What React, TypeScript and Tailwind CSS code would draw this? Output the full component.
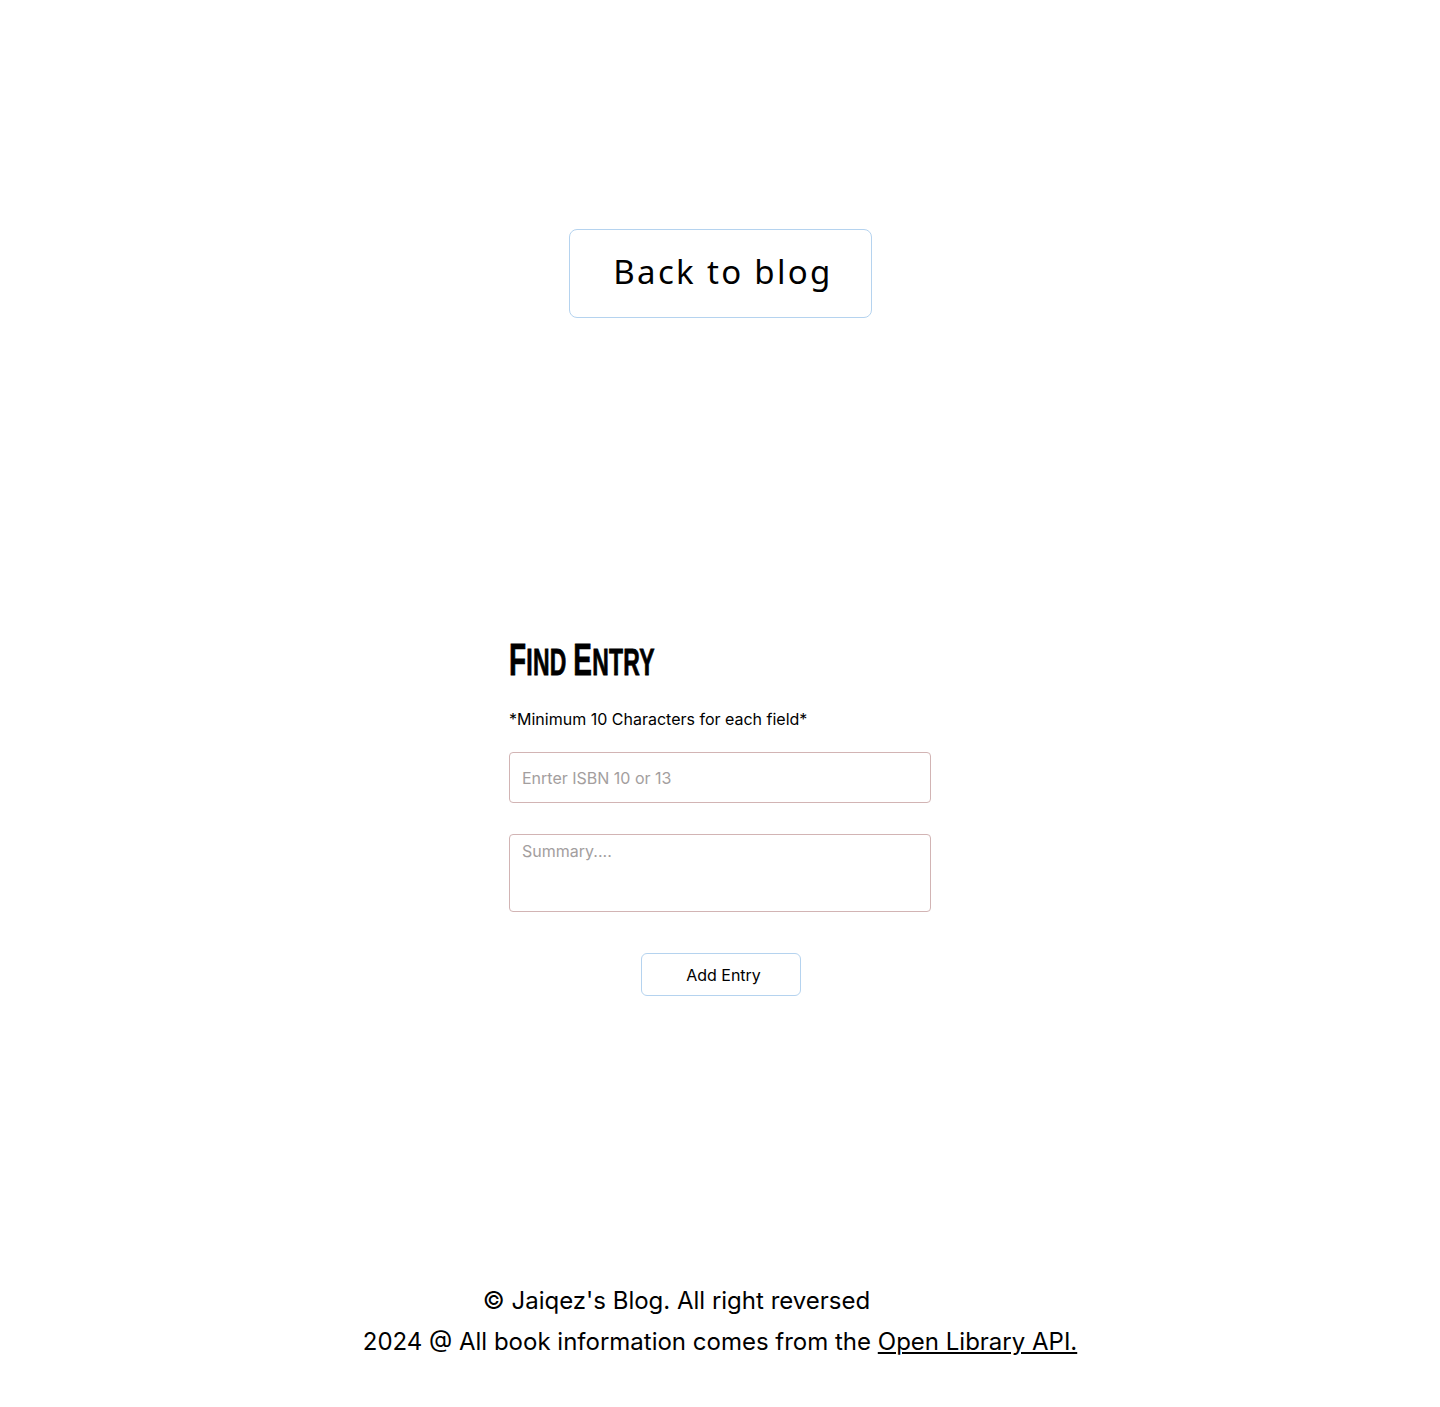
import { useState } from "react";

const App = () => {
  const [isbn, setIsbn] = useState("");
  const [summary, setSummary] = useState("");

  return (
    <div className="min-h-[1407px] bg-white text-black font-['Inter',sans-serif] flex flex-col items-center">
      <div className="pt-[229px]">
        <a
          href="#"
          className="flex h-[89px] w-[303px] items-center justify-center rounded-[8px] border border-[#b5d3ef] pb-[4px] pl-[6px] text-[33px] tracking-[0.07em] font-['Noto_Sans',sans-serif]"
        >
          Back to blog
        </a>
      </div>

      <form className="mt-[319px] flex w-[422px] flex-col" onSubmit={(e) => e.preventDefault()}>
        <h1 className="origin-left scale-x-[0.62] whitespace-nowrap font-['Liberation_Sans',sans-serif] text-[45px] font-bold uppercase leading-[46px] tracking-[0.01em] [-webkit-text-stroke:0.8px_black]">
          <span>F</span>
          <span className="text-[37px]">ind </span>
          <span>E</span>
          <span className="text-[37px]">ntry</span>
        </h1>
        <p className="mt-[23px] text-[16px] leading-[20px]">*Minimum 10 Characters for each field*</p>
        <input
          value={isbn}
          onChange={(e) => setIsbn(e.target.value)}
          placeholder="Enrter ISBN 10 or 13"
          className="mt-[23px] h-[51px] w-full rounded-[4px] border border-[#d2b4b4] px-[12px] text-[16px] outline-none placeholder:text-[#a39e9e]"
        />
        <textarea
          value={summary}
          onChange={(e) => setSummary(e.target.value)}
          placeholder="Summary...."
          className="mt-[31px] h-[78px] w-full resize-none rounded-[4px] border border-[#d2b4b4] px-[12px] py-[4px] text-[16px] outline-none placeholder:text-[#a39e9e]"
        />
        <div className="mt-[41px] flex justify-center">
          <button
            type="submit"
            className="ml-[2px] h-[43px] w-[160px] rounded-[6px] border border-[#b5d3ef] pl-[5px] text-[16px]"
          >
            Add Entry
          </button>
        </div>
      </form>

      <footer className="mt-[284px] flex flex-col items-center text-[24px] leading-[41px]">
        <p className="pr-[87px]">© Jaiqez's Blog. All right reversed</p>
        <p>
          2024 @ All book information comes from the{" "}
          <a href="#" className="underline">
            Open Library API.
          </a>
        </p>
      </footer>
    </div>
  );
};

export default App;
